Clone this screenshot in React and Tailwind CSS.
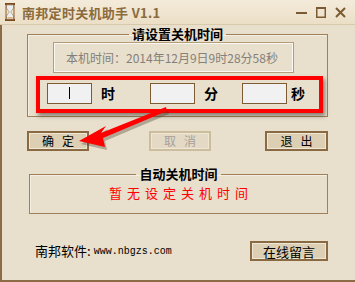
import React from 'react';

const cjk = "font-['Noto_Sans_CJK_SC','DejaVu_Sans',sans-serif]";

function Btn({ children, className = '', disabled = false }) {
  return (
    <button
      className={`h-[20px] flex items-center justify-center text-[12px] leading-none border-2 shadow-[inset_0_0_0_1px_#efe6d4] ${
        disabled
          ? 'border-[#cdbd9f] bg-[#e3d9c5] text-[#a6a09a]'
          : 'border-[#8a6a42] bg-[#dccfb3] text-black'
      } ${className}`}
    >
      {children}
    </button>
  );
}

function TimeInput({ cursor = false }) {
  return (
    <div className="w-[45px] h-[21px] bg-[#f1f1f1] border border-[#7d5c34] flex items-center justify-center">
      {cursor && <div className="w-px h-[12px] bg-black" />}
    </div>
  );
}

export default function App() {
  return (
    <div className={`w-[355px] h-[282px] flex flex-col relative overflow-hidden bg-[#e8dfcd] ${cjk}`}>
      {/* title bar */}
      <div className="h-[25px] flex items-center bg-gradient-to-b from-[#f4ebda] to-[#ebdfc7] border-b border-[#d8c9ab]">
        <svg width="10" height="18" viewBox="0 0 10 18" className="ml-[5px]">
          <rect x="0" y="0" width="10" height="2" fill="#7a4a22" />
          <rect x="0" y="16" width="10" height="2" fill="#7a4a22" />
          <path d="M1.5 2 L8.5 2 L8.5 5 L5.8 9 L8.5 13 L8.5 16 L1.5 16 L1.5 13 L4.2 9 L1.5 5 Z" fill="#e9eef2" stroke="#b49a7a" strokeWidth="0.8" />
          <path d="M2.5 14 L7.5 14 L7.5 15.5 L2.5 15.5 Z" fill="#d9b77a" />
          <rect x="0.5" y="2" width="1" height="14" fill="#8a5a30" />
          <rect x="8.5" y="2" width="1" height="14" fill="#8a5a30" />
        </svg>
        <span className="ml-[7px] text-[13px] font-bold text-[#8b6a3c] leading-none tracking-[0.3px]">南邦定时关机助手 V1.1</span>
        <div className="ml-auto mr-[9px] flex items-center gap-[9px] text-[#7a5a32]">
          <svg width="11" height="11" viewBox="0 0 11 11"><rect x="0" y="5" width="11" height="2" fill="currentColor" /></svg>
          <svg width="10" height="11" viewBox="0 0 10 11"><rect x="0.75" y="0.75" width="8.5" height="9.5" fill="none" stroke="currentColor" strokeWidth="1.5" /><rect x="0" y="0" width="10" height="2" fill="currentColor" /></svg>
          <svg width="11" height="11" viewBox="0 0 11 11"><path d="M1 1 L10 10 M10 1 L1 10" stroke="currentColor" strokeWidth="2" /></svg>
        </div>
      </div>

      {/* body */}
      <div className="flex-1 flex flex-col border-l-2 border-b-2 border-[#8d6c45]">
        {/* group 1 */}
        <fieldset className="ml-[25px] mt-[1px] w-[301px] border border-[#a0805a] shadow-[inset_1px_1px_0_#f5efe2] pb-[3px]">
          <legend className="mx-auto px-[3px] text-[13px] font-bold leading-[16px] text-black">请设置关机时间</legend>
          <div className="ml-[25px] w-[241px] h-[31px] border border-[#b29c7a] shadow-[inset_0_0_0_1px_#fbf8f1] flex items-center pl-[12px] text-[12px] text-[#858079]">
            本机时间：2014年12月9日9时28分58秒
          </div>
          <div className="ml-[8px] mt-[3px] w-[287px] h-[37px] border-4 border-[#ff0000] shadow-[2px_3px_4px_rgba(60,50,40,0.55)] flex items-center pb-[3px] text-[14px] font-bold text-black">
            <div className="ml-[7px]"><TimeInput cursor /></div>
            <span className="ml-[9px]">时</span>
            <div className="ml-[35px]"><TimeInput /></div>
            <span className="ml-[9px]">分</span>
            <div className="ml-[24px]"><TimeInput /></div>
            <span className="ml-[4px]">秒</span>
          </div>
        </fieldset>

        {/* buttons */}
        <div className="flex mt-[14px]">
          <Btn className="ml-[25px] w-[62px] tracking-[8px] pl-[8px]">确定</Btn>
          <Btn disabled className="ml-[60px] w-[62px] tracking-[8px] pl-[8px]">取消</Btn>
          <Btn className="ml-[54px] w-[63px] tracking-[8px] pl-[8px]">退出</Btn>
        </div>

        {/* group 2 */}
        <fieldset className="ml-[27px] mt-[15px] w-[299px] h-[48px] border border-[#a0805a] shadow-[inset_1px_1px_0_#f5efe2]">
          <legend className="mx-auto px-[3px] text-[13px] font-bold leading-[16px] text-black">自动关机时间</legend>
          <div className="text-center text-[13px] leading-[16px] tracking-[5px] pl-[5px] text-[#ff0000] mt-[3px]">暂无设定关机时间</div>
        </fieldset>

        {/* footer */}
        <div className="flex items-center mt-[27px]">
          <span className="ml-[33px] text-[13px] text-black">南邦软件:</span>
          <span className="ml-[3px] text-[10px] font-['Liberation_Mono',monospace] text-black">www.nbgzs.com</span>
          <Btn className="ml-auto mr-[27px] w-[78px] text-[13px]">在线留言</Btn>
        </div>
      </div>

      {/* red arrow pointing at the confirm button */}
      <svg className="absolute left-0 top-0 pointer-events-none" width="355" height="282" viewBox="0 0 355 282">
        <g transform="translate(2,3)" opacity="0.35">
          <polygon points="79,141 106,126 101,133 166,107 167,111 103,138 105,147" fill="#4a3a2a" />
        </g>
        <polygon points="79,141 106,126 101,133 166,107 167,111 103,138 105,147" fill="#ff0000" />
      </svg>
    </div>
  );
}
